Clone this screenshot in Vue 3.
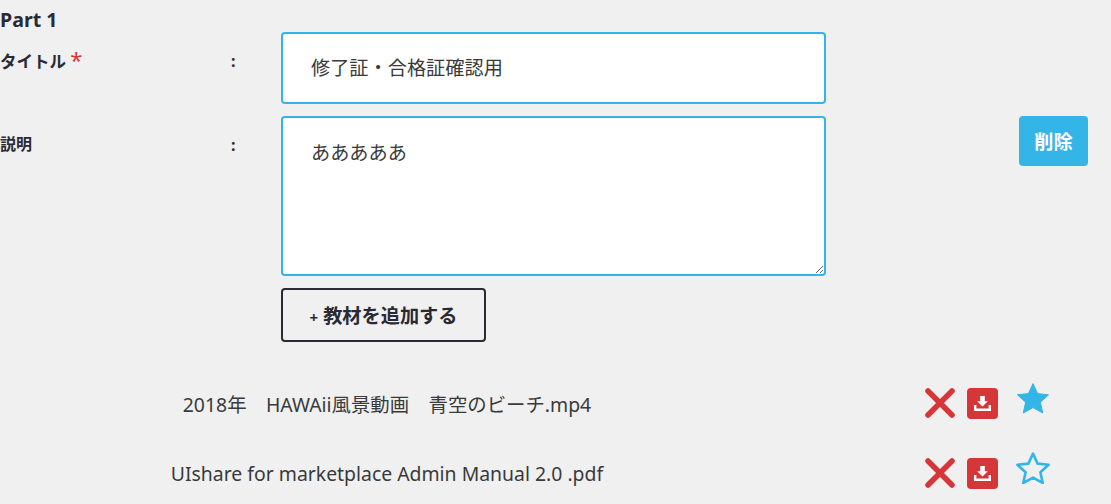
<template>
  <div class="page">
    <div class="part-title">Part 1</div>

    <div class="form-grid">
      <div class="form-row title-row">
        <label class="label">タイトル <span class="req">*</span></label>
        <span class="colon">:</span>
        <input class="field" type="text" :value="title" />
      </div>

      <div class="form-row desc-row">
        <label class="label small">説明</label>
        <span class="colon">:</span>
        <div class="desc-col">
          <textarea class="field area" :value="description"></textarea>
          <button class="add-btn"><span class="plus">+</span> 教材を追加する</button>
        </div>
        <button class="del-btn">削除</button>
      </div>
    </div>

    <div class="files">
      <div v-for="file in files" :key="file.name" class="file-row">
        <div class="file-name">{{ file.name }}</div>
        <svg class="ic-x" width="30" height="30" viewBox="0 0 30 30">
          <path d="M3 3L27 27M27 3L3 27" stroke="#d63638" stroke-width="5.5" stroke-linecap="round" fill="none" />
        </svg>
        <span class="dl">
          <svg width="17" height="15" viewBox="0 0 17 15">
            <path d="M6.2 0h4.6v5.2h3L8.5 10.4 3.2 5.2h3z" fill="#fff" />
            <path d="M0 9h2.4v3.4h12.2V9H17v6H0z" fill="#fff" />
          </svg>
        </span>
        <svg class="ic-star" width="34" height="32" viewBox="0 0 34 32">
          <path
            d="M17 1.6l4.6 10 11 1.2-8.2 7.4 2.3 10.8L17 25.6l-9.7 5.4 2.3-10.8-8.2-7.4 11-1.2z"
            :fill="file.starred ? '#33b5e8' : 'none'"
            stroke="#33b5e8"
            :stroke-width="file.starred ? 1 : 2.6"
            stroke-linejoin="round"
          />
        </svg>
      </div>
    </div>
  </div>
</template>

<script setup>
const title = '修了証・合格証確認用'
const description = 'あああああ'

const files = [
  { name: '2018年　HAWAii風景動画　青空のビーチ.mp4', starred: true },
  { name: 'UIshare for marketplace Admin Manual 2.0 .pdf', starred: false }
]
</script>

<style>
html, body {
  margin: 0;
  background: #f0f0f0;
  overflow: hidden;
}
</style>

<style scoped>
.page {
  width: 1111px;
  height: 504px;
  overflow: hidden;
  box-sizing: border-box;
  padding-top: 8px;
  font-family: "Noto Sans", "Noto Sans CJK JP", sans-serif;
  color: #2a2a35;
}

.part-title {
  font-size: 19.6px;
  font-weight: 700;
  line-height: 24px;
}

.form-row {
  display: grid;
  grid-template-columns: 232px 49px 545px 193px 69px;
  align-items: start;
}

.desc-row {
  margin-top: 12px;
}

.label {
  font-size: 16.5px;
  font-weight: 700;
  line-height: 24px;
  margin-top: 17px;
}

.label.small {
  font-size: 16px;
  margin-top: 16px;
}

.req {
  color: #d63638;
  font-size: 22px;
  font-weight: 400;
  line-height: 20px;
}

.colon {
  font-size: 16px;
  font-weight: 700;
  line-height: 24px;
  margin-top: 17px;
  margin-left: -1px;
}

.field {
  display: block;
  box-sizing: border-box;
  width: 545px;
  height: 72px;
  padding: 0 28px 2px;
  background: #fff;
  border: 2px solid #33b5e8;
  border-radius: 4px;
  outline: none;
  font-family: inherit;
  font-size: 19.2px;
  color: #3a3a3a;
}

.area {
  height: 160px;
  padding: 21px 28px;
  line-height: 27px;
  resize: vertical;
}

.desc-col {
  grid-column: 3;
}

.add-btn {
  display: block;
  box-sizing: border-box;
  width: 205px;
  height: 54px;
  margin-top: 12px;
  padding: 0;
  background: transparent;
  border: 2px solid #2a2a35;
  border-radius: 4px;
  font-family: inherit;
  font-size: 19.2px;
  font-weight: 700;
  color: #2a2a35;
}

.plus {
  font-size: 15px;
}

.del-btn {
  grid-column: 5;
  height: 50px;
  width: 69px;
  padding: 0;
  background: #33b5e8;
  border: none;
  border-radius: 4px;
  font-family: inherit;
  font-size: 19.2px;
  font-weight: 700;
  color: #fff;
}

.files {
  margin-top: 26px;
}

.file-row {
  display: flex;
  align-items: center;
  height: 70px;
}

.file-name {
  width: 774px;
  text-align: center;
  font-size: 19.4px;
  color: #3a3a3a;
}

.ic-x {
  margin-left: 151px;
}

.dl {
  display: flex;
  align-items: center;
  justify-content: center;
  width: 31px;
  height: 31px;
  margin-left: 12px;
  background: #d63638;
  border-radius: 4px;
}

.ic-star {
  margin-left: 18px;
  position: relative;
  top: -5px;
}
</style>
